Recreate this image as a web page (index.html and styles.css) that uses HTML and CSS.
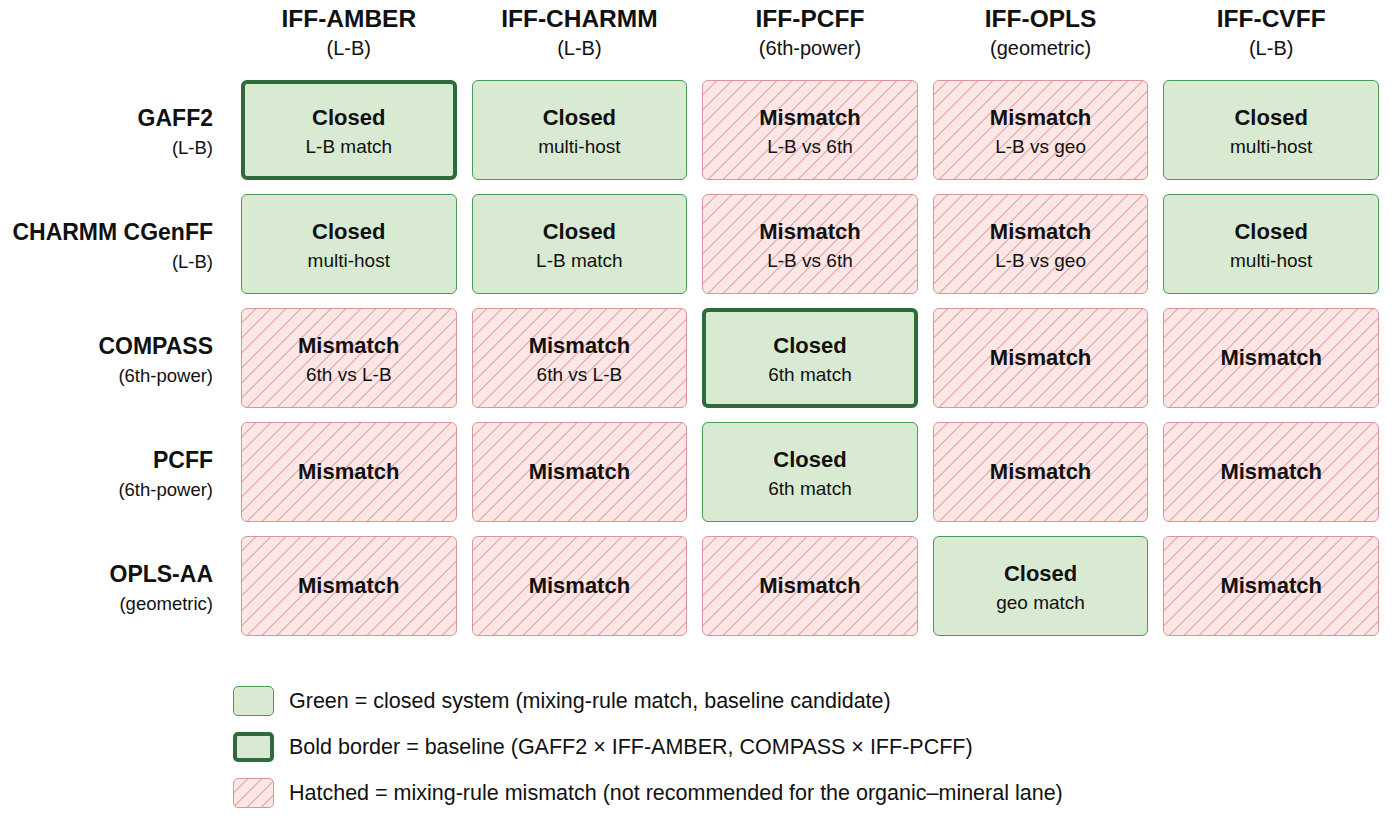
FILE: index.html
```html
<!DOCTYPE html>
<html lang="en">
<head>
    <meta charset="UTF-8">
    <title>Force field mixing-rule matrix</title>
    <link rel="stylesheet" href="styles.css">
</head>
<body>
    <div class="matrix">
        <div class="corner"></div>
        <div class="col-head"><div class="title">IFF-AMBER</div><div class="sub">(L-B)</div></div>
        <div class="col-head"><div class="title">IFF-CHARMM</div><div class="sub">(L-B)</div></div>
        <div class="col-head"><div class="title">IFF-PCFF</div><div class="sub">(6th-power)</div></div>
        <div class="col-head"><div class="title">IFF-OPLS</div><div class="sub">(geometric)</div></div>
        <div class="col-head"><div class="title">IFF-CVFF</div><div class="sub">(L-B)</div></div>

        <div class="row-head"><div class="title">GAFF2</div><div class="sub">(L-B)</div></div>
        <div class="cell closed baseline"><div class="main">Closed</div><div class="note">L-B match</div></div>
        <div class="cell closed"><div class="main">Closed</div><div class="note">multi-host</div></div>
        <div class="cell mismatch"><div class="main">Mismatch</div><div class="note">L-B vs 6th</div></div>
        <div class="cell mismatch"><div class="main">Mismatch</div><div class="note">L-B vs geo</div></div>
        <div class="cell closed"><div class="main">Closed</div><div class="note">multi-host</div></div>

        <div class="row-head"><div class="title">CHARMM CGenFF</div><div class="sub">(L-B)</div></div>
        <div class="cell closed"><div class="main">Closed</div><div class="note">multi-host</div></div>
        <div class="cell closed"><div class="main">Closed</div><div class="note">L-B match</div></div>
        <div class="cell mismatch"><div class="main">Mismatch</div><div class="note">L-B vs 6th</div></div>
        <div class="cell mismatch"><div class="main">Mismatch</div><div class="note">L-B vs geo</div></div>
        <div class="cell closed"><div class="main">Closed</div><div class="note">multi-host</div></div>

        <div class="row-head"><div class="title">COMPASS</div><div class="sub">(6th-power)</div></div>
        <div class="cell mismatch"><div class="main">Mismatch</div><div class="note">6th vs L-B</div></div>
        <div class="cell mismatch"><div class="main">Mismatch</div><div class="note">6th vs L-B</div></div>
        <div class="cell closed baseline"><div class="main">Closed</div><div class="note">6th match</div></div>
        <div class="cell mismatch"><div class="main">Mismatch</div></div>
        <div class="cell mismatch"><div class="main">Mismatch</div></div>

        <div class="row-head"><div class="title">PCFF</div><div class="sub">(6th-power)</div></div>
        <div class="cell mismatch"><div class="main">Mismatch</div></div>
        <div class="cell mismatch"><div class="main">Mismatch</div></div>
        <div class="cell closed"><div class="main">Closed</div><div class="note">6th match</div></div>
        <div class="cell mismatch"><div class="main">Mismatch</div></div>
        <div class="cell mismatch"><div class="main">Mismatch</div></div>

        <div class="row-head"><div class="title">OPLS-AA</div><div class="sub">(geometric)</div></div>
        <div class="cell mismatch"><div class="main">Mismatch</div></div>
        <div class="cell mismatch"><div class="main">Mismatch</div></div>
        <div class="cell mismatch"><div class="main">Mismatch</div></div>
        <div class="cell closed"><div class="main">Closed</div><div class="note">geo match</div></div>
        <div class="cell mismatch"><div class="main">Mismatch</div></div>
    </div>

    <div class="legend">
        <div class="legend-row"><span class="swatch closed"></span>Green = closed system (mixing-rule match, baseline candidate)</div>
        <div class="legend-row"><span class="swatch closed baseline"></span>Bold border = baseline (GAFF2 × IFF-AMBER, COMPASS × IFF-PCFF)</div>
        <div class="legend-row"><span class="swatch mismatch"></span>Hatched = mixing-rule mismatch (not recommended for the organic–mineral lane)</div>
    </div>
</body>
</html>
```

FILE: styles.css
```css
body {
    margin: 0;
    background: #fff;
    color: #111;
    font-family: "Liberation Sans", Arial, sans-serif;
}

.matrix {
    display: grid;
    grid-template-columns: 226px repeat(5, 215.6px);
    grid-template-rows: 66px repeat(5, 100px);
    column-gap: 15px;
    row-gap: 14px;
}

.col-head {
    text-align: center;
    padding-top: 6px;
}

.col-head .title {
    font-size: 24.5px;
    font-weight: bold;
    line-height: 26px;
}

.col-head .sub {
    font-size: 20px;
    line-height: 22px;
    margin-top: 5px;
}

.row-head {
    display: flex;
    flex-direction: column;
    justify-content: center;
    align-items: flex-end;
    padding-right: 13px;
    text-align: right;
}

.row-head .title {
    font-size: 23px;
    font-weight: bold;
    line-height: 26px;
}

.row-head .sub {
    font-size: 18.5px;
    line-height: 22px;
    margin-top: 6px;
    margin-bottom: -4px;
}

.cell {
    display: flex;
    flex-direction: column;
    justify-content: center;
    align-items: center;
    border-radius: 6px;
    box-sizing: border-box;
}

.main {
    font-size: 22px;
    font-weight: bold;
    line-height: 24px;
}

.note {
    font-size: 19px;
    line-height: 22px;
    margin-top: 6px;
    margin-bottom: -4px;
}

.closed {
    background: #d9ead3;
    border: 1.5px solid #4a9c55;
}

.closed.baseline {
    border: 4px solid #2f6a3a;
}

.mismatch {
    border: 1.5px solid #db9595;
    background-color: #fce6e6;
    background-image: repeating-linear-gradient(135deg, #fce6e6 0, #fce6e6 8.8px, #ecb3b3 8.8px, #ecb3b3 10.6px);
}

.legend {
    margin-top: 50px;
    margin-left: 233px;
    display: flex;
    flex-direction: column;
    gap: 16px;
}

.legend-row {
    display: flex;
    align-items: center;
    gap: 15px;
    font-size: 21.5px;
    height: 30px;
}

.swatch {
    width: 41px;
    height: 30px;
    border-radius: 5px;
    box-sizing: border-box;
    flex: none;
}

.swatch.mismatch {
    background-image: repeating-linear-gradient(135deg, #fce6e6 0, #fce6e6 8.5px, #ecb3b3 8.5px, #ecb3b3 10px);
}

.swatch.closed.baseline {
    border-width: 4px;
}
```
